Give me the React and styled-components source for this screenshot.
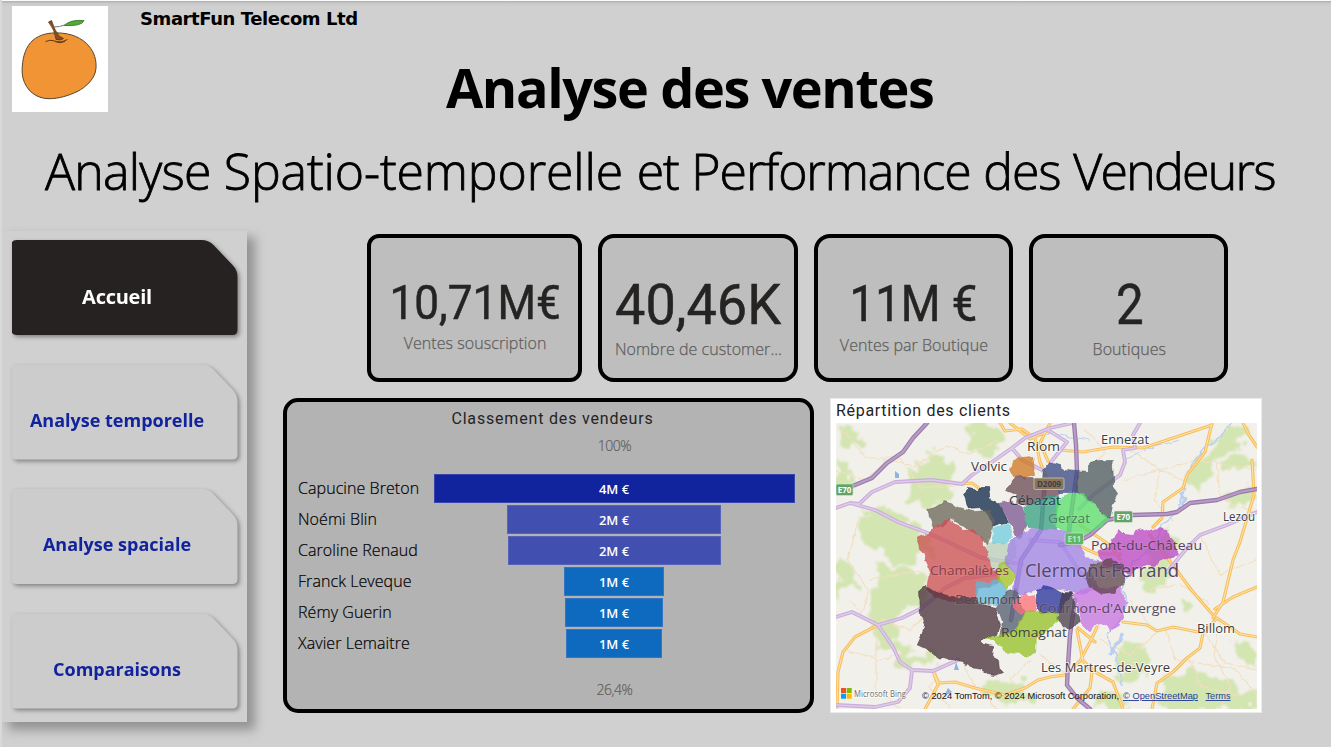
import React from "react";
import styled, { createGlobalStyle } from "styled-components";

const sans = `"Open Sans", "Noto Sans", sans-serif`;
const din = `Roboto, "Liberation Sans", sans-serif`;

const GlobalStyle = createGlobalStyle`
  * { box-sizing: border-box; }
  body { margin: 0; background: #d0d0d0; font-family: ${sans}; overflow: hidden; }
`;

const Page = styled.main`
  width: 1331px;
  height: 747px;
  display: flex;
  flex-direction: column;
  background: linear-gradient(#fafafa 0 1px, #b4b4b4 1px 2px, #c9c9c9 3px, #d0d0d0 7px);
  border-left: 2px solid #d9d9d9;
  overflow: hidden;
`;

const Header = styled.header`
  display: grid;
  grid-template-columns: 96px 1fr;
  grid-template-rows: 106px 119px;
  padding: 6px 0 0 10px;
  height: 231px;
`;

const Logo = styled.div`
  background: #fff;
  svg { display: block; }
`;

const Headings = styled.div`
  display: flex;
  flex-direction: column;
  padding-left: 32px;
`;

const Company = styled.div`
  padding-top: 1px;
  font: 700 18px/24px "DejaVu Sans", sans-serif;
  letter-spacing: -0.42px;
  color: #000;
  white-space: nowrap;
`;

const Title = styled.h1`
  margin: 18px 0 0;
  padding-left: 306px;
  font: 700 54px/76px ${sans};
  letter-spacing: -1.4px;
  color: #000;
  white-space: nowrap;
`;

const Subtitle = styled.h2`
  grid-column: 1 / -1;
  margin: 21px 0 0 33px;
  font: 300 50px/76px ${sans};
  word-spacing: 0.8px;
  -webkit-text-stroke: 0.8px #000;
  color: #000;
  white-space: nowrap;
`;

const Words = styled.span`
  letter-spacing: ${(p) => p.$track}px;
`;

const Body = styled.div`
  display: flex;
  flex: 1;
`;

const Sidebar = styled.nav`
  width: 245px;
  height: 491px;
  flex: none;
  display: flex;
  flex-direction: column;
  gap: 29.5px;
  padding: 9px 0 0 9.5px;
  background: #d0d0d0;
  box-shadow: 7px 7px 10px 1px #939393;
`;

const NavShadow = styled.div`
  filter: drop-shadow(2px 2px 2px rgba(0, 0, 0, 0.38));
`;

const NavButton = styled.a`
  display: flex;
  align-items: center;
  justify-content: center;
  width: 226px;
  height: 95px;
  padding: ${(p) => (p.$active ? 19 : 15.5)}px 15px 0 0;
  clip-path: path("M5 0H190Q197 0 202 5L221 25Q226 30 226 37V90Q226 95 221 95H5Q0 95 0 90V5Q0 0 5 0Z");
  background: ${(p) => (p.$active ? "#262221" : "#cccccc")};
  color: ${(p) => (p.$active ? "#fff" : "#12239e")};
  font: 700 ${(p) => (p.$active ? 20 : 18)}px/24px ${sans};
  letter-spacing: ${(p) => (p.$active ? -0.25 : 0)}px;
  white-space: nowrap;
`;

const Content = styled.section`
  display: flex;
  flex-direction: column;
  gap: 16px;
  padding: 2.5px 0 0 36px;
`;

const Kpis = styled.div`
  display: flex;
  gap: 16px;
  margin-left: 84px;
`;

const KpiCard = styled.article`
  width: ${(p) => p.$w}px;
  height: 148.5px;
  padding: ${(p) => p.$top}px 0 0 1px;
  display: flex;
  flex-direction: column;
  align-items: center;
  border: 4.5px solid #000;
  border-radius: ${(p) => p.$radius}px;
  background: #bebebe;
`;

const KpiValue = styled.div`
  font: 400 ${(p) => p.$size}px/${(p) => p.$line}px ${din};
  transform: scaleX(${(p) => p.$squeeze});
  -webkit-text-stroke: 0.5px #252423;
  color: #252423;
  white-space: nowrap;
`;

const KpiLabel = styled.div`
  font: 300 16px/22px ${sans};
  letter-spacing: 0.05px;
  -webkit-text-stroke: 0.25px #605e5c;
  color: #605e5c;
  white-space: nowrap;
`;

const Panels = styled.div`
  display: flex;
  gap: 16px;
`;

const FunnelPanel = styled.article`
  width: 531px;
  height: 314.5px;
  display: flex;
  flex-direction: column;
  border: 4.5px solid #000;
  border-radius: 15px;
  background: #b3b3b3;
  padding: 5px 13px 0 11px;
`;

const FunnelTitle = styled.h3`
  margin: 0 0 0 10px;
  font: 400 16px/24px ${din};
  letter-spacing: 0.82px;
  color: #252423;
  text-align: center;
`;

const Percent = styled.div`
  width: 361px;
  margin: ${(p) => p.$top}px 0 0 136px;
  font: 300 14px/20px ${sans};
  letter-spacing: -0.5px;
  -webkit-text-stroke: 0.2px #605e5c;
  color: #605e5c;
  text-align: center;
`;

const FunnelRows = styled.div`
  display: flex;
  flex-direction: column;
  gap: 2.5px;
  margin-top: 18px;
`;

const FunnelRow = styled.div`
  display: grid;
  grid-template-columns: 135.5px 361px;
  justify-items: center;
  align-items: center;
  height: 28.5px;
`;

const Seller = styled.span`
  justify-self: start;
  font: 300 16px/22px ${sans};
  letter-spacing: 0.07px;
  -webkit-text-stroke: 0.2px #000;
  color: #000;
  white-space: nowrap;
`;

const Bar = styled.div`
  height: 28.5px;
  width: ${(p) => p.$w}px;
  background: ${(p) => p.$color};
  border: 1px solid rgba(130, 135, 200, 0.35);
  color: #fff;
  font: 600 13px/28.500px ${sans};
  text-align: center;
`;

const MapPanel = styled.article`
  width: 432px;
  height: 315px;
  background: #fff;
  border: 1px solid #ebebeb;
  padding: 0 0 0 5px;
`;

const MapTitle = styled.h3`
  margin: 0;
  font: 400 16px/23.500px ${din};
  letter-spacing: 0.7px;
  color: #252423;
`;

const MapDrawing = styled.svg`
  display: block;
  width: 421px;
  height: 286px;
`;

const PlaceName = styled.text`
  font-family: ${sans};
  font-size: ${(p) => p.$size || 13}px;
  fill: ${(p) => p.$color || "#3c3c3c"};
  paint-order: stroke;
  stroke: rgba(255, 255, 255, ${(p) => (p.$halo === undefined ? 0.7 : p.$halo)});
  stroke-width: 2px;
`;

const Credit = styled.text`
  font-family: "Liberation Sans", sans-serif;
  font-size: 9.5px;
  fill: ${(p) => (p.$link ? "#25409b" : "#111")};
  text-decoration: ${(p) => (p.$link ? "underline" : "none")};
`;

const NAV = [
  { label: "Accueil", active: true },
  { label: "Analyse temporelle" },
  { label: "Analyse spaciale" },
  { label: "Comparaisons" },
];

const KPIS = [
  { value: "10,71M€", label: "Ventes souscription", w: 215.2, radius: 12, size: 48, line: 58, top: 36.5, squeeze: 0.92 },
  { value: "40,46K", label: "Nombre de customer...", w: 199.5, radius: 16, size: 56, line: 66, top: 34.5, squeeze: 0.965 },
  { value: "11M €", label: "Ventes par Boutique", w: 199.5, radius: 16, size: 49.5, line: 60, top: 36.5, squeeze: 0.92 },
  { value: "2", label: "Boutiques", w: 199.3, radius: 16, size: 56, line: 66, top: 34.5, squeeze: 0.88 },
];

const SELLERS = [
  { name: "Capucine Breton", value: "4M €", w: 361, color: "#12239e" },
  { name: "Noémi Blin", value: "2M €", w: 214, color: "#414fb1" },
  { name: "Caroline Renaud", value: "2M €", w: 213, color: "#414fb1" },
  { name: "Franck Leveque", value: "1M €", w: 100.5, color: "#0d6abf" },
  { name: "Rémy Guerin", value: "1M €", w: 98.5, color: "#0d6abf" },
  { name: "Xavier Lemaitre", value: "1M €", w: 95.5, color: "#0d6abf" },
];

const WOODS = [
  "M836 425l20 5 8 12-14 10-14-4Z",
  "M918 460l25-6 10 12-4 30-14 14-22-6-4-22Z",
  "M860 515l32-6 40 26-2 20-24 10-44-20Z",
  "M880 562l20 4 22 10 4 30-24 6-10 26 22 10-14 10-22-14-10-30Z",
  "M836 455l14 12 4 22-16 8Z",
  "M970 423l26 0 6 20-18 16-16-14Z",
  "M836 560l16 8 6 18-22 12Z",
  "M1228 423l22 4-12 20-22 12-10 22-14 12-6-14 18-24Z",
  "M1222 495l30-10 4 18-22 8Z",
  "M1222 460l22-8 8 10-22 10Z",
  "M1128 640l20 12-4 20-22 8-6-18Z",
  "M1160 680l26-8 40 4 16 14 16-2v21h-100Z",
  "M1100 690l20 4 8 14h-34Z",
  "M1162 530l14 6-6 34-14 20-18-8 12-22Z",
  "M985 676l34 4 14 18-20 8-30-10Z",
  "M1232 640l24 6v20l-20-8Z",
  "M895 655l40 0 6 8-40 4Z",
  "M1180 600l16 6-8 10Z",
];

const LANES = [
  "M836 470l30 10 20-20 30 6 30-20 24 8 28-14",
  "M842 428l24 30 34 0 20 30 50-4",
  "M858 520l-10 40 20 30-6 30",
  "M870 580l50-10M850 600l26 30 0 60 26 19",
  "M940 668l-10 20 20 20M960 650l10 30 28 30",
  "M1130 450l30 20 40-10 56 10M1160 470l-6 30 20 20",
  "M1125 480l34-10 26 10M1215 455l6 44 36 14",
  "M1200 535l20 40 37-16M1150 590l30-6 30 20",
  "M1130 600l20 24M1165 629l10 30 60 10 22 26",
  "M1205 633l20 30 32 6M1100 640l30 14 26-20",
  "M1190 660l10 26 40 10M1040 655l28 20M1010 680l20-20",
  "M1220 620l-6 36 16 30-10 23M1085 430l20 20-10 14",
  "M880 620l30 10 20-20M845 650l36 10 20-6",
];

const YELLOW = [
  "M1000 423l5 8 17-2 13 9 5 24 6 14",
  "M1010 423l20 16 18-8M1050 423l-10 20 8 18",
  "M1212 423l-7 29-18 23-4 13-20 14-1 16-9 9",
  "M1212 425l-9 3-30 10-30 10-30-1-30 5-23-2",
  "M1243 423l6 12 8 12M1252 460l2 35-14 47-7 18-10 42-10 16",
  "M878 625l-23 12-12 15-5 20-1 35",
  "M925 709l13-24-5-14 6 12 16-1 20 6 30 7 20-7 13-8 12-3 15-2 15-14 10-19 7-15",
  "M1123 622l24 3 10 6 16-4 30 6 14-15",
  "M1150 535l28 37 15 20 20 23M1215 609l18-12 24-10M1217 618l23 16 17 3",
  "M1203 633l-3 15-13 10-14 14-16 11-5 26",
  "M1078 628l17 14M1077 630l6 31 9 11-2 16-17 21",
  "M1083 661l14 12 16 9 10 27",
  "M1080 525l30 20 10 14M1077 545l20 9 24 0",
  "M962 484l10-1 8 6",
];

const LILAC = [
  "M836 508l14-5 9 1 13-12 23-10 37-2 30 4 10-9 20-13 20-14 13-10 25-10 23-5",
  "M850 503l25 7 23 12 27 10 23 10 34 16 40 6",
  "M836 617l16-5 26 13 24-7 20-10 23-20 20-10 30-4",
  "M878 625l15 22 7 15 12 8 21 1 25-11",
  "M912 670l-2 18-12 14-23 5-39-2",
  "M1012 448l10 12 20 10M1048 430l19 12-16 20",
  "M1140 423l-7 12 2 13-12 2 2 12-5 13-27 20-14 14",
  "M1257 512l-30 13-27 10-13 13-10 12-10 12",
  "M1030 540l30 2 20 30 20 20",
];

const MOTORWAY = [
  "M927 423l-14 15-10 14-16 11-15 15-17 7-19 6",
  "M1074 423l2 22 1 27-7 50-2 20",
  "M1060 545l17-3 13-7 17-15 26-5 34-1 10-2 13-9 27-3 23-8 17-3",
  "M1075 600l-5 35-2 30-1 20 10 13 13 11",
  "M1045 480l-4 50-20 30-10 60",
];

const AREAS = [
  ["#bcd0ba", "M985 545l8-4 15 2 6-5 2 20-12 4-8 12-6-8Z"],
  ["#d0781f", "M1013 459l8-2 11-1 1 6 1 13-9 3-5-3-7 1-3-6 2-5Z"],
  ["#6b4a53", "M1015 476l5-1 8 3 10 0 15 9 7 5-12 6-20 6-12-1 1-8-12-5 5-5Z"],
  ["#3a4982", "M1042 478l1-8 5-8 12 3 4 5 13 1 0 21-17 0-7-5Z"],
  ["#4b5a5e", "M1077 471l11 1 0-10 10-2 15 0-1 6 1 10 0 11 4 6-5 11-3 15-6-3-6-8-14-12-7-4Z"],
  ["#0b2949", "M963 493l5-5 10 2 1-3 9 0 2 13 8 3 10 19-9 1-6 4-5-11-8-9-12 1Z"],
  ["#6b6758", "M927 509l7-2 11-6 13 6 15 4 17-1 3 15-6 20-9-10-28-17-7 7-10 3Z"],
  ["#7c5590", "M998 503l14-3 10 8 4 15-6 16-5-2-3-9-5-10Z"],
  ["#36a080", "M1023 507l9-5 18-7 8-1-3 34-28 0Z"],
  ["#58df6c", "M1055 502l12-9 15 0 8 8 10 12 9 6-9 7-10 4-5 5-15-1-8-5-10-6 3-5 0-6Z"],
  ["#70cee0", "M993 529l7-4 8-2 4 15-7 5-5-1-8 0Z"],
  ["#cc4d50", "M917 538l11-5 3-4 9-4 3-5 6-2 4 5 7 3 2 4 11-1 5 7 4 1 0 8 4 4 3 16 10 9 0 6-4 4-17 4-4 14-20 1-22-8-6-6 5-16-5-12-3-8-4-4Z"],
  ["#49313b", "M919 590l6-5 13 8 20 4 17 0 7 8 15 3-1 7 4 9-4 10-4 2-12 4 3 3 9 2 1 4-1 9 6 3 1 8 3 3-8 3-7-1-6-5-11-2-8-5-24-5-10-8-11-5 5-11 2-10-4-8Z"],
  ["#63b7dc", "M977 581l10 1 13-3 7 13-10 13-17-1-5-12Z"],
  ["#a0c428", "M997 565l10-4 8 14-4 8-5 6-8-10Z"],
  ["#515c71", "M1007 590l10-2 2 15 6 8-8 18-18 8 3-16-5-14Z"],
  ["#ff7177", "M1012 600l8-3 5-6 2 5 8-1 3 10-4 6-9 0-4 3-8-6Z"],
  ["#9f83e6", "M1008 544l6-6 16-9 25-1 25 8 1 12 4 10 14 2-10 9 8 18-15 6-22-4-20-1-20 6-7-6 2-14-10-10Z"],
  ["#26309b", "M1037 589l7-4 7 2 11 6 10 0-8 10-4 10-20-1-3-6Z"],
  ["#4a3d4c", "M1062 592l10 0 2 17 6 13-12 7-11-10Z"],
  ["#95c326", "M1025 611l12-1 20 3 1 7-10 9-12 9-1 14-10 4-5-3-15-1-3-7-5-2-4-4-9 0 12-4 19-4 5-10Z"],
  ["#c874e2", "M1073 593l14-5 33-1 3 11 4 5-4 4-1 11-6 8-6 4-3-5-6-2-7 2-5 7-8-8-3-12Z"],
  ["#bb46c5", "M1098 550l10-3 4-8 8-10 5 5 8 1 2-5 6-2 6 4 12-4 8 1 2 9 4 4 5 12-14 5-10 6-7-1-11 4-6 7-6-5-12-4-10 2Z"],
  ["#5e454c", "M1085 575l5-11 12-4 8-2 13 7 1 17-12 11-10 1-12-7Z"],
];

const PLACES = [
  ["Riom", 1027, 451, 33],
  ["Ennezat", 1101, 444, 48],
  ["Volvic", 971, 471, 36],
  ["Cébazat", 1009, 505, 52, "#2b3f4b"],
  ["Gerzat", 1048, 523, 42, "#49805a"],
  ["Lezou", 1223, 521, 32],
  ["Pont-du-Château", 1091, 550, 111, "#59405a"],
  ["Chamalières", 930, 575, 79, "#863f4b"],
  ["Beaumont", 955, 604, 66, "#4d4c58"],
  ["Cournon-d'Auvergne", 1039, 613, 137, "#564a62"],
  ["Billom", 1197, 633, 38],
  ["Romagnat", 1001, 637, 66, "#41453a"],
  ["Les Martres-de-Veyre", 1041, 672, 129],
];

function Shield({ x, y, w, text, fill = "#65a26a", color = "#fff" }) {
  return (
    <g>
      <rect x={x} y={y} width={w} height="11.5" rx="1.5" fill={fill} stroke="#dbe8d3" strokeOpacity=".6" />
      <text x={x + w / 2} y={y + 9} textAnchor="middle" fontFamily="Open Sans, sans-serif" fontWeight="700" fontSize="8" fill={color}>
        {text}
      </text>
    </g>
  );
}

function Roads({ lines, casing, fill, width, inner = 2.2 }) {
  const d = lines.join("");
  return (
    <g fill="none" strokeLinejoin="round" strokeLinecap="round">
      <path d={d} stroke={casing} strokeWidth={width} />
      {fill && <path d={d} stroke={fill} strokeWidth={width - inner} />}
    </g>
  );
}

function ClientMap() {
  return (
    <MapDrawing viewBox="836 423 421 286">
      <defs>
        <filter id="woods" x="-10%" y="-10%" width="120%" height="120%">
          <feTurbulence type="fractalNoise" baseFrequency="0.07" numOctaves="3" seed="4" result="n" />
          <feDisplacementMap in="SourceGraphic" in2="n" scale="26" xChannelSelector="R" yChannelSelector="G" />
          <feGaussianBlur stdDeviation="1.1" />
        </filter>
        <filter id="wobble" x="-10%" y="-10%" width="120%" height="120%">
          <feTurbulence type="fractalNoise" baseFrequency="0.12" numOctaves="2" seed="9" result="n" />
          <feDisplacementMap in="SourceGraphic" in2="n" scale="5" xChannelSelector="R" yChannelSelector="G" />
        </filter>
      </defs>
      <rect x="836" y="423" width="421" height="286" fill="#f2f0eb" />
      <g fill="#d3e5b0" filter="url(#woods)">
        {WOODS.map((d) => <path key={d} d={d} />)}
      </g>
      <g filter="url(#wobble)">
        <Roads lines={LANES} casing="#f3dfc0" width={1.1} />
      </g>
      <g fill="none" stroke="#b9cff0" strokeWidth="1.5" filter="url(#wobble)">
        <path d="M1232 423l-14 16-16 12-14 20-4 20-6 20-16 14-6 20-22 16-12 28 6 14-10 20-12 12 10 20 6 30" />
        <path d="M1180 440l-30 8-26 12M1040 432l50 8" strokeWidth="1" />
        <path d="M1181 492l4 6-3 8M1122 632l-2 8-6 8-4 8" strokeWidth="3" />
      </g>
      <path d="M895 471l4 3 0 4-4 0ZM956 662l3 8-5 0ZM948 688l4 4-8 4Z" fill="#8fb4e0" />
      <Roads lines={YELLOW} casing="#f8bf5e" fill="#fde6ae" width={3.2} />
      <Roads lines={LILAC} casing="#c9addb" fill="#dfcbe9" width={3.8} />
      <Roads lines={MOTORWAY} casing="#977aab" fill="#b89bc6" width={4.4} />
      <g filter="url(#wobble)" transform="translate(0.5 0.5)">
        {AREAS.map(([color, d]) => (
          <path key={d} d={d} fill={color} fillOpacity="0.76" stroke={color} strokeOpacity="0.5" strokeWidth="1" />
        ))}
      </g>
      <Shield x={836} y={484} w={17} text="E70" />
      <Shield x={1114} y={511} w={18.5} text="E70" />
      <Shield x={1065} y={533} w={18.5} text="E11" fill="#5fb663" color="#bfe8c0" />
      <Shield x={1034} y={478} w={30} text="D2009" fill="#8b7458" color="#3d3d46" />
      {PLACES.map(([name, x, y, w, color]) => (
        <PlaceName key={name} x={x} y={y} textLength={w} lengthAdjust="spacingAndGlyphs" $color={color} $halo={color ? 0.08 : 0.7}>
          {name}
        </PlaceName>
      ))}
      <PlaceName x="1025" y="577" textLength="154" lengthAdjust="spacingAndGlyphs" $size={18} $color="#52456a" $halo={0.12}>
        Clermont-Ferrand
      </PlaceName>
      <rect x="841" y="688" width="5" height="5" fill="#f25022" />
      <rect x="846.7" y="688" width="5" height="5" fill="#7fba00" />
      <rect x="841" y="693.7" width="5" height="5" fill="#00a4ef" />
      <rect x="846.7" y="693.7" width="5" height="5" fill="#ffb900" />
      <PlaceName x="854" y="697" textLength="52" lengthAdjust="spacingAndGlyphs" $size={9.5} $color="#6e6e6e">
        Microsoft Bing
      </PlaceName>
      <Credit x="922" y="699" textLength="197" lengthAdjust="spacingAndGlyphs">
        © 2024 TomTom, © 2024 Microsoft Corporation,
      </Credit>
      <Credit $link x="1123" y="699" textLength="75" lengthAdjust="spacingAndGlyphs">© OpenStreetMap</Credit>
      <Credit $link x="1205.5" y="699" textLength="25" lengthAdjust="spacingAndGlyphs">Terms</Credit>
    </MapDrawing>
  );
}

function OrangeLogo() {
  return (
    <Logo>
      <svg width="96" height="106" viewBox="12 6 96 106">
        <path d="M22.3 72C23 62 26 52 33 46C40 40 49 38.500 58 38.700C71 39 82 43.500 89 52C94.500 58.500 96.500 66 96 74C95.500 84 86 93 77 97.500C68 101.500 59 104.500 49 104.500C36 104.500 26 96 23 84C22 80 22 76 22.300 72Z" fill="#f19436" stroke="#59452f" strokeWidth="1" transform="translate(0 -5.800)" />
        <path d="M45.500 41.500Q50 39.500 54 40.800Q60 43.500 67.500 39.500M55 41.500Q60 44 65 41.500" fill="none" stroke="#5e3a17" strokeWidth="1" />
        <path d="M48.500 22L51.500 20.500Q55 31 59 36L63.500 38.500Q61 41 56 39.500Q55 30 48.500 22Z" fill="#854d20" stroke="#4e2e14" strokeWidth=".7" />
        <path d="M53.500 27Q60 27 64.500 25" fill="none" stroke="#777" strokeWidth="1" />
        <path d="M64 25.500Q70 19.500 84 20.500Q82 26.500 64 25.500Z" fill="#4fae2e" stroke="#3d6a30" strokeWidth=".8" />
      </svg>
    </Logo>
  );
}

export default function App() {
  return (
    <>
      <GlobalStyle />
      <Page>
        <Header>
          <OrangeLogo />
          <Headings>
            <Company>SmartFun Telecom Ltd</Company>
            <Title>Analyse des ventes</Title>
          </Headings>
          <Subtitle>
            <Words $track={-0.75}>Analyse </Words>
            <Words $track={-0.13}>Spatio-temporelle </Words>
            <Words $track={-1.1}>et Performance des </Words>
            <Words $track={-1.7}>Vendeurs</Words>
          </Subtitle>
        </Header>
        <Body>
          <Sidebar>
            {NAV.map((n) => (
              <NavShadow key={n.label}>
                <NavButton $active={n.active}>{n.label}</NavButton>
              </NavShadow>
            ))}
          </Sidebar>
          <Content>
            <Kpis>
              {KPIS.map((k) => (
                <KpiCard key={k.label} $w={k.w} $radius={k.radius} $top={k.top}>
                  <KpiValue $size={k.size} $line={k.line} $squeeze={k.squeeze}>{k.value}</KpiValue>
                  <KpiLabel>{k.label}</KpiLabel>
                </KpiCard>
              ))}
            </Kpis>
            <Panels>
              <FunnelPanel>
                <FunnelTitle>Classement des vendeurs</FunnelTitle>
                <Percent $top={5}>100%</Percent>
                <FunnelRows>
                  {SELLERS.map((s) => (
                    <FunnelRow key={s.name}>
                      <Seller>{s.name}</Seller>
                      <Bar $w={s.w} $color={s.color}>{s.value}</Bar>
                    </FunnelRow>
                  ))}
                </FunnelRows>
                <Percent $top={22}>26,4%</Percent>
              </FunnelPanel>
              <MapPanel>
                <MapTitle>Répartition des clients</MapTitle>
                <ClientMap />
              </MapPanel>
            </Panels>
          </Content>
        </Body>
      </Page>
    </>
  );
}
